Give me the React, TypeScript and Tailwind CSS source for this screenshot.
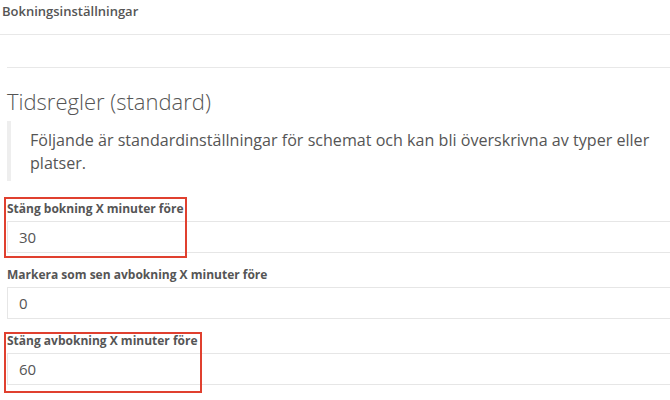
import React from "react";

function Field({ label, value }: { label: string; value: string }) {
  return (
    <div>
      <label className="block text-[12px] font-bold leading-[16px] text-[#555] mb-[4px]">{label}</label>
      <div className="h-[32px] border border-[#e6e6e6] -mr-[6px] flex items-center pl-[11px] text-[15px] text-[#555]">{value}</div>
    </div>
  );
}

export default function App() {
  return (
    <div className="w-[670px] h-[400px] bg-white overflow-hidden relative" style={{ fontFamily: '"Open Sans", sans-serif' }}>
      <div className="h-[35px] border-b border-[#e8e8e8] pl-[2px] pt-[2px]">
        <div className="text-[13px] font-semibold leading-[18px] text-[#555]">Bokningsinställningar</div>
      </div>
      <div className="ml-[7px] mt-[32px] border-t border-[#e8e8e8]">
        <h2 className="mt-[20px] text-[22px] font-light leading-[26px] text-[#555]">Tidsregler (standard)</h2>
        <div className="mt-[7px] border-l-[4px] border-[#eeeeee] pl-[19px] pt-[8px] pb-[6px] text-[16.1px] leading-[23px] text-[#555]">
          Följande är standardinställningar för schemat och kan bli överskrivna av typer eller platser.
        </div>
        <div className="mt-[20px] flex flex-col gap-[14px]">
          <Field label="Stäng bokning X minuter före" value="30" />
          <Field label="Markera som sen avbokning X minuter före" value="0" />
          <Field label="Stäng avbokning X minuter före" value="60" />
        </div>
      </div>
      <div className="absolute left-[4px] top-[197px] w-[183px] h-[61px] border-2 border-[#e0402f]" />
      <div className="absolute left-[4px] top-[332px] w-[198px] h-[61px] border-2 border-[#e0402f]" />
    </div>
  );
}
